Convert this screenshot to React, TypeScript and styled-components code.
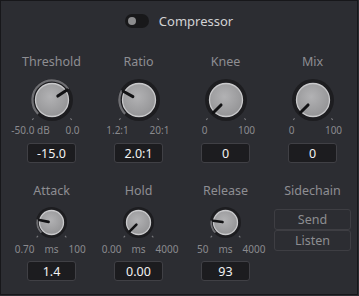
import React from "react";
import styled, { createGlobalStyle } from "styled-components";

const Global = createGlobalStyle`
  html, body { margin: 0; padding: 0; background: #2c2d32; }
  body { font-family: "Noto Sans", "Open Sans", sans-serif; }
`;

const Frame = styled.div`
  width: 358px;
  height: 295px;
  box-sizing: border-box;
  border: 1px solid #17171a;
  background: #2c2d32;
  padding: 0 7px;
  display: flex;
  flex-direction: column;
`;

const Header = styled.div`
  height: 40px;
  display: flex;
  align-items: center;
  justify-content: center;
  gap: 10px;
`;

const Toggle = styled.div`
  width: 24px;
  height: 14px;
  border-radius: 7px;
  background: #18181a;
  display: flex;
  align-items: center;
  padding-left: 3px;
  box-sizing: border-box;
`;

const Thumb = styled.div`
  width: 8px;
  height: 8px;
  border-radius: 50%;
  background: #8c8c8e;
`;

const Title = styled.div`
  font-size: 13px;
  color: #d2d2d4;
`;

const Grid = styled.div`
  margin-top: 13px;
  display: grid;
  grid-template-columns: repeat(4, 87px);
  row-gap: 20px;
`;

const Cell = styled.div`
  display: flex;
  flex-direction: column;
  align-items: center;
`;

const Label = styled.div`
  font-size: 12.5px;
  line-height: 16px;
  height: 16px;
  color: #8e8e92;
  white-space: nowrap;
`;

const KnobWrap = styled.div<{ $small?: boolean }>`
  margin-top: ${(p) => (p.$small ? 8 : 9)}px;
  display: flex;
  justify-content: center;
`;

const KnobSvg = styled.svg`
  overflow: visible;
  display: block;
`;

const ScaleTwo = styled.div`
  margin-top: 3px;
  width: 84px;
  display: grid;
  grid-template-columns: 1fr 1fr;
  font-size: 10px;
  line-height: 12px;
  color: #8a8a8e;
  text-align: center;
  white-space: nowrap;
`;

const ScaleThree = styled.div`
  margin-top: 5px;
  width: 100%;
  display: grid;
  grid-template-columns: 1fr 34px 1fr;
  font-size: 10px;
  line-height: 12px;
  color: #8a8a8e;
  white-space: nowrap;
`;

const ScaleItem = styled.span<{ $align: "left" | "center" | "right" }>`
  text-align: ${(p) => p.$align};
`;

const ValueBox = styled.div<{ $small?: boolean }>`
  margin-top: ${(p) => (p.$small ? 6 : 7)}px;
  width: 49px;
  height: 20px;
  box-sizing: border-box;
  border: 1px solid #404045;
  border-radius: 3px;
  background: #1c1c1f;
  color: #f2f2f2;
  font-size: 12.5px;
  display: flex;
  align-items: center;
  justify-content: center;
`;

const SideButtons = styled.div`
  margin-top: 10px;
  display: flex;
  flex-direction: column;
  width: 77px;
`;

const SideButton = styled.div`
  height: 21px;
  box-sizing: border-box;
  border: 1px solid #3e3e43;
  border-radius: 3px;
  color: #8d8d91;
  font-size: 12.5px;
  display: flex;
  align-items: center;
  justify-content: center;
`;

const pt = (cx: number, cy: number, r: number, deg: number) => {
  const a = (deg * Math.PI) / 180;
  return [cx + r * Math.sin(a), cy - r * Math.cos(a)];
};

function Knob({ angle, small }: { angle: number; small?: boolean }) {
  const R = small ? 15.5 : 21;
  const face = small ? 12 : 16.5;
  const arcR = small ? 14.3 : 19.6;
  const arcW = small ? 1.8 : 2.3;
  const tickR1 = small ? 19 : 26;
  const tickR2 = small ? 21 : 28;
  const p1 = small ? 3 : 7;
  const p2 = small ? 12.5 : 18;
  const size = R * 2;
  const c = R;
  const span = angle + 135;
  const [sx, sy] = pt(c, c, arcR, -135);
  const [ex, ey] = pt(c, c, arcR, angle);
  const arc = `M ${sx} ${sy} A ${arcR} ${arcR} 0 ${span > 180 ? 1 : 0} 1 ${ex} ${ey}`;
  const [a1x, a1y] = pt(c, c, p1, angle);
  const [a2x, a2y] = pt(c, c, p2, angle);
  const ticks = [-135, 135].map((d) => {
    const [x1, y1] = pt(c, c, tickR1, d);
    const [x2, y2] = pt(c, c, tickR2, d);
    return <line key={d} x1={x1} y1={y1} x2={x2} y2={y2} stroke="#7a7a7e" strokeWidth={1.1} />;
  });
  const gid = small ? "gs" : "gl";
  return (
    <KnobWrap $small={small}>
      <KnobSvg width={size} height={size} viewBox={`0 0 ${size} ${size}`}>
        <defs>
          <radialGradient id={gid} cx="45%" cy="40%" r="65%">
            <stop offset="0%" stopColor="#b2b2b4" />
            <stop offset="100%" stopColor="#929294" />
          </radialGradient>
        </defs>
        {ticks}
        <circle cx={c} cy={c} r={R} fill="#1d1d20" />
        {span > 0.5 && (
          <path d={arc} fill="none" stroke="#6e6e72" strokeWidth={arcW} />
        )}
        <circle cx={c} cy={c} r={face} fill={`url(#${gid})`} stroke="#c9c9cb" strokeWidth={1.3} />
        <line x1={a1x} y1={a1y} x2={a2x} y2={a2y} stroke="#121214" strokeWidth={small ? 2.6 : 3} strokeLinecap="round" />
      </KnobSvg>
    </KnobWrap>
  );
}

function BigControl({ label, angle, min, max, value }: { label: string; angle: number; min: string; max: string; value: string }) {
  return (
    <Cell>
      <Label>{label}</Label>
      <Knob angle={angle} />
      <ScaleTwo>
        <span>{min}</span>
        <span>{max}</span>
      </ScaleTwo>
      <ValueBox>{value}</ValueBox>
    </Cell>
  );
}

function SmallControl({ label, angle, min, max, value }: { label: string; angle: number; min: string; max: string; value: string }) {
  return (
    <Cell>
      <Label>{label}</Label>
      <Knob angle={angle} small />
      <ScaleThree>
        <ScaleItem $align="right">{min}</ScaleItem>
        <ScaleItem $align="center">ms</ScaleItem>
        <ScaleItem $align="left">{max}</ScaleItem>
      </ScaleThree>
      <ValueBox $small>{value}</ValueBox>
    </Cell>
  );
}

export default function App() {
  return (
    <>
      <Global />
      <Frame>
        <Header>
          <Toggle>
            <Thumb />
          </Toggle>
          <Title>Compressor</Title>
        </Header>
        <Grid>
          <BigControl label="Threshold" angle={56} min="-50.0 dB" max="0.0" value="-15.0" />
          <BigControl label="Ratio" angle={-61} min="1.2:1" max="20:1" value="2.0:1" />
          <BigControl label="Knee" angle={-135} min="0" max="100" value="0" />
          <BigControl label="Mix" angle={-135} min="0" max="100" value="0" />
          <SmallControl label="Attack" angle={-78} min="0.70" max="100" value="1.4" />
          <SmallControl label="Hold" angle={-135} min="0.00" max="4000" value="0.00" />
          <SmallControl label="Release" angle={-82} min="50" max="4000" value="93" />
          <Cell>
            <Label>Sidechain</Label>
            <SideButtons>
              <SideButton>Send</SideButton>
              <SideButton>Listen</SideButton>
            </SideButtons>
          </Cell>
        </Grid>
      </Frame>
    </>
  );
}
